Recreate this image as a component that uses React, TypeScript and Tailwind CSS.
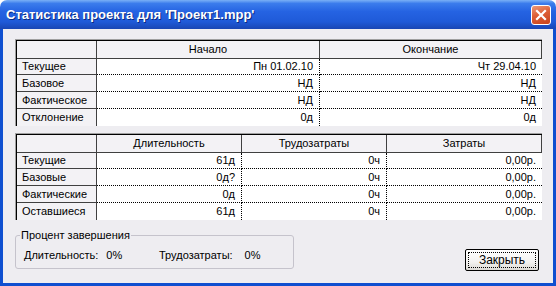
const font = { fontFamily: '"Liberation Sans", Arial, sans-serif' };

const labelCell = "w-[80px] shrink-0 border-b border-r border-[#404040] bg-[#f3f2f5] pl-[5px]";
const dataCell = "border-b border-r border-dotted border-black bg-white pr-[6px] text-right";
const headCell = "h-[18px] border-b border-r border-[#404040] bg-[#f3f2f5] text-center leading-[17px]";

function StatGrid({
  columns,
  widths,
  rows
}: {
  columns: string[];
  widths: string[];
  rows: { label: string; values: string[] }[];
}) {
  return (
    <div className="border-l border-t border-[#a0a0a0] border-r-white border-b-white">
      <div className="border-l border-t border-black">
        <div className="flex">
          <div className={`${headCell} w-[80px] shrink-0`} />
          {columns.map((col, i) => (
            <div key={col} className={`${headCell} ${widths[i]}`}>
              {col}
            </div>
          ))}
        </div>
        {rows.map((row, r) => {
          const last = r === rows.length - 1;
          const height = r === 0 ? "h-[16px] leading-[15px]" : "h-[17px] leading-[16px]";
          return (
            <div key={row.label} className="flex">
              <div className={`${labelCell} ${height} ${last ? "border-b-0" : ""}`}>{row.label}</div>
              {row.values.map((v, i) => (
                <div
                  key={i}
                  className={`${dataCell} ${height} ${widths[i]} ${last ? "border-b-0" : ""} ${
                    i === row.values.length - 1 ? "border-r-0" : ""
                  }`}
                >
                  {v}
                </div>
              ))}
            </div>
          );
        })}
      </div>
    </div>
  );
}

export default function App() {
  return (
    <div className="flex h-[286px] w-[556px] flex-col text-[11px] text-black" style={font}>
      {/* title bar */}
      <div className="flex h-[29px] shrink-0 items-center justify-between rounded-t-[7px] bg-[linear-gradient(180deg,#7ab0f6_0%,#3b7cec_12%,#2563e2_40%,#1f5ad8_75%,#1946b4_100%)] pl-[6px] pr-[5px]">
        <span className="text-[13px] font-bold text-white [text-shadow:1px_1px_0_#0a2a80]">
          Статистика проекта для 'Проект1.mpp'
        </span>
        <button className="flex size-[20px] items-center justify-center rounded-[3px] border border-white bg-[linear-gradient(160deg,#eb9a7a_0%,#dd5f36_45%,#c8421c_100%)]">
          <svg width="12" height="12" viewBox="0 0 12 12">
            <path d="M2 2 L10 10 M10 2 L2 10" stroke="white" strokeWidth="2.2" strokeLinecap="square" />
          </svg>
        </button>
      </div>

      {/* body */}
      <div className="flex flex-1 flex-col border-x-[3px] border-b-[3px] border-[#0f4fd0] bg-[#eeedf1] pl-[12px] pr-[11px] pt-[10px]">
        <StatGrid
          columns={["Начало", "Окончание"]}
          widths={["w-[223px]", "flex-1"]}
          rows={[
            { label: "Текущее", values: ["Пн 01.02.10", "Чт 29.04.10"] },
            { label: "Базовое", values: ["НД", "НД"] },
            { label: "Фактическое", values: ["НД", "НД"] },
            { label: "Отклонение", values: ["0д", "0д"] }
          ]}
        />
        <div className="mt-[7px]">
          <StatGrid
            columns={["Длительность", "Трудозатраты", "Затраты"]}
            widths={["w-[145px]", "w-[145px]", "flex-1"]}
            rows={[
              { label: "Текущие", values: ["61д", "0ч", "0,00р."] },
              { label: "Базовые", values: ["0д?", "0ч", "0,00р."] },
              { label: "Фактические", values: ["0д", "0ч", "0,00р."] },
              { label: "Оставшиеся", values: ["61д", "0ч", "0,00р."] }
            ]}
          />
        </div>

        <div className="mt-[9px] flex items-start justify-between">
          <fieldset className="h-[40px] w-[279px] rounded-[3px] border border-[#c5c3cc] pl-[8px]">
            <legend className="ml-[-4px] px-[1px] leading-[13px]">Процент завершения</legend>
            <div className="mt-[5px] flex">
              <span className="w-[135px]">
                Длительность:<span className="ml-[8px]">0%</span>
              </span>
              <span>
                Трудозатраты:<span className="ml-[12px]">0%</span>
              </span>
            </div>
          </fieldset>
          <button className="mr-[3px] mt-[20px] flex h-[22px] w-[74px] items-center justify-center rounded-[2px] border border-black bg-[linear-gradient(180deg,#ffffff_0%,#f3f2f0_60%,#dcdad5_100%)] p-[2px]">
            <span className="flex h-full w-full items-center justify-center border border-dotted border-black text-[12px]">
              Закрыть
            </span>
          </button>
        </div>
      </div>
    </div>
  );
}
